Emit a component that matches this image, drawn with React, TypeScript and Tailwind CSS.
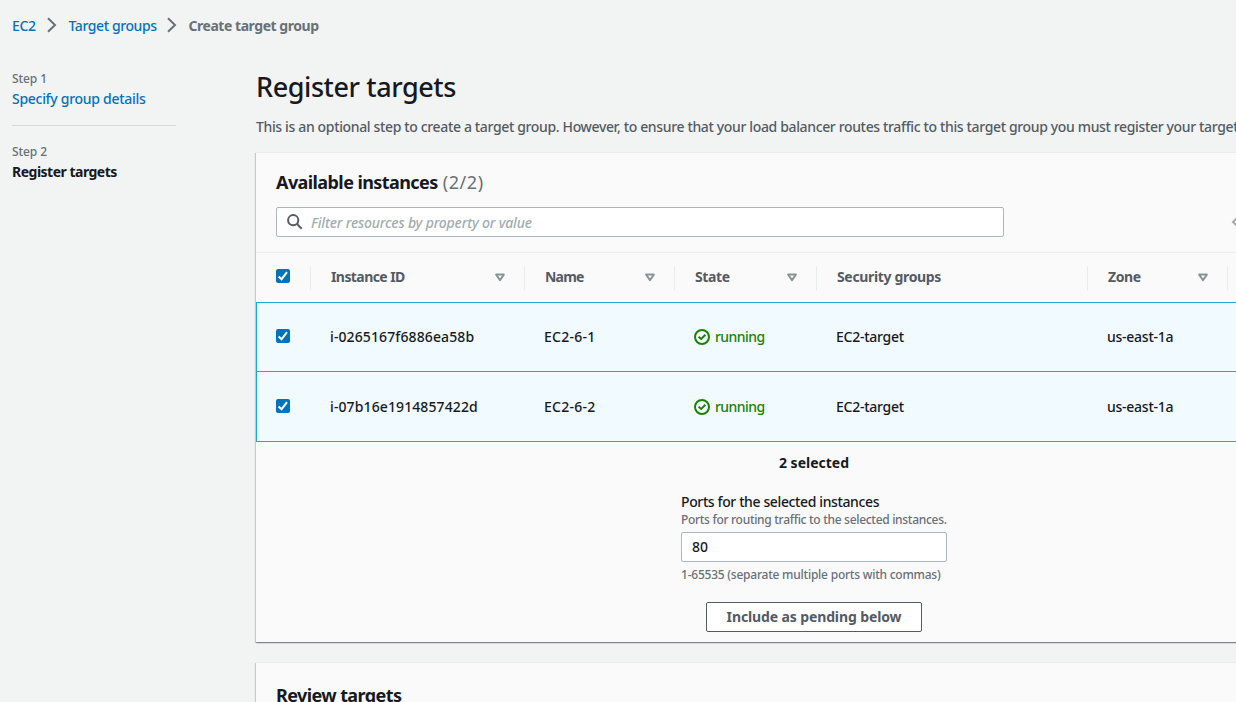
import React from "react";

type Instance = { id: string; name: string; state: string; group: string; zone: string };

const instances: Instance[] = [
  { id: "i-0265167f6886ea58b", name: "EC2-6-1", state: "running", group: "EC2-target", zone: "us-east-1a" },
  { id: "i-07b16e1914857422d", name: "EC2-6-2", state: "running", group: "EC2-target", zone: "us-east-1a" },
];

const columns = [
  { label: "Instance ID", sortable: true, tracking: "tracking-[-0.58px]" },
  { label: "Name", sortable: true, tracking: "tracking-[-0.8px]" },
  { label: "State", sortable: true, tracking: "tracking-[-0.4px]" },
  { label: "Security groups", sortable: false, tracking: "tracking-[-0.34px]" },
  { label: "Zone", sortable: true, tracking: "tracking-[-0.4px]" },
];

const gridCols = "grid grid-cols-[54px_214px_150px_142px_271px_140px_1fr]";

const cardClass =
  "w-[1116px] border-t border-[#eaeded] bg-[#fafafa] shadow-[0_1px_1px_0_rgba(0,28,36,0.3),1px_1px_1px_0_rgba(0,28,36,0.15),-1px_1px_1px_0_rgba(0,28,36,0.15)]";

function BreadcrumbChevron() {
  return (
    <svg className="h-4 w-[10px] shrink-0" viewBox="0 0 10 16" fill="none" stroke="#687078" strokeWidth="2">
      <path d="M1 1.3 8 8 1 14.7" />
    </svg>
  );
}

function SortIcon() {
  return (
    <svg className="h-[9px] w-[10px] shrink-0" viewBox="0 0 10 9" fill="none" stroke="#879596" strokeWidth="2" strokeLinejoin="round">
      <path d="M1.2 1.6h7.6L5 7.2z" />
    </svg>
  );
}

function Checkbox() {
  return (
    <span className="flex h-[14px] w-[14px] items-center justify-center rounded-[2px] bg-[#0073bb]">
      <svg className="h-[14px] w-[14px]" viewBox="0 0 14 14" fill="none" stroke="#fff" strokeWidth="2">
        <path d="M2.6 7.4 5.6 10.2 11 3.2" />
      </svg>
    </span>
  );
}

function RunningIcon() {
  return (
    <svg className="h-4 w-4 shrink-0" viewBox="0 0 16 16" fill="none" stroke="#1d8102" strokeWidth="2">
      <circle cx="8" cy="8" r="7" />
      <path d="M4.6 7.7 7.2 10 11.4 5.8" />
    </svg>
  );
}

function Breadcrumbs() {
  return (
    <nav className="flex h-5 items-center text-[#0073bb]">
      <a className="w-[35px] pt-px tracking-[-0.3px]">EC2</a>
      <BreadcrumbChevron />
      <a className="ml-[11.5px] w-[98.5px] pt-px tracking-[-0.41px]">Target groups</a>
      <BreadcrumbChevron />
      <span className="ml-[11.5px] pt-px font-bold tracking-[-0.46px] text-[#687078]">Create target group</span>
    </nav>
  );
}

function Steps() {
  return (
    <aside className="w-[164px] shrink-0">
      <div className="text-[12px] leading-[21px] tracking-[-0.1px] text-[#687078]">Step 1</div>
      <div className="tracking-[-0.29px] text-[#0073bb]">Specify group details</div>
      <div className="mt-4 h-px bg-[#d5dbdb]" />
      <div className="mt-4 text-[12px] tracking-[-0.1px] text-[#687078]">Step 2</div>
      <div className="font-bold tracking-[-0.5px]">Register targets</div>
    </aside>
  );
}

function InstanceRow({ item, first }: { item: Instance; first: boolean }) {
  return (
    <div className={`${gridCols} h-[70px] items-center border-b border-l border-[#1aabcf] bg-[#f1faff] ${first ? "border-t" : ""}`}>
      <div className="-mt-[2px] pl-[19px]"><Checkbox /></div>
      <div className="pl-[19px] tracking-[0.11px]">{item.id}</div>
      <div className="pl-[19px] tracking-[0.25px]">{item.name}</div>
      <div className="flex items-center gap-[5px] pl-[19px] tracking-[-0.55px] text-[#1d8102]">
        <RunningIcon />
        {item.state}
      </div>
      <div className="pl-[19px] tracking-[-0.25px]">{item.group}</div>
      <div className="pl-[19px] tracking-[-0.25px]">{item.zone}</div>
      <div />
    </div>
  );
}

function AvailableInstances() {
  return (
    <section className={`${cardClass} h-[490px]`}>
      <h2 className="flex gap-[5px] pt-[17px] pl-5 text-[18px] leading-6">
        <span className="font-bold tracking-[-0.58px]">Available instances</span>
        <span className="font-normal tracking-[0.6px] text-[#687078]">(2/2)</span>
      </h2>
      <div className="mt-[13px] flex items-center pl-5">
        <div className="flex h-[30px] w-[728px] items-center rounded-[2px] border border-[#aab7b8] bg-white pl-[10px]">
          <svg className="h-4 w-4 shrink-0" viewBox="0 0 16 16" fill="none" stroke="#545b64" strokeWidth="2">
            <circle cx="6.2" cy="6.2" r="5.1" />
            <path d="m9.9 9.9 4.8 4.8" />
          </svg>
          <span className="ml-2 pt-px tracking-[-0.18px] text-[#9fadae] italic">Filter resources by property or value</span>
        </div>
        <svg className="ml-[227px] h-4 w-[10px]" viewBox="0 0 10 16" fill="none" stroke="#9fadae" strokeWidth="2">
          <path d="M8 2.3 2 8 8 13.7" />
        </svg>
      </div>
      <div className={`${gridCols} mt-[15px] h-[50px] items-center border-t border-[#eaeded] text-[#545b64]`}>
        <div className="-mt-[3px] pl-5"><Checkbox /></div>
        {columns.map((c) => (
          <div key={c.label} className="flex h-6 items-center justify-between border-l border-[#eaeded] pr-[19px] pl-5">
            <span className={`pb-[2px] font-bold ${c.tracking}`}>{c.label}</span>
            {c.sortable && <SortIcon />}
          </div>
        ))}
        <div className="h-6 border-l border-[#eaeded]" />
      </div>
      {instances.map((item, i) => (
        <InstanceRow key={item.id} item={item} first={i === 0} />
      ))}
      <div className="flex flex-col items-center pt-[11px]">
        <div className="font-bold">2 selected</div>
        <div className="mt-[19px] w-[266px] whitespace-nowrap">
          <div className="leading-5 tracking-[-0.38px]">Ports for the selected instances</div>
          <div className="text-[12px] leading-4 tracking-[-0.3px] text-[#687078]">Ports for routing traffic to the selected instances.</div>
          <div className="mt-1 flex h-[30px] items-center rounded-[2px] border border-[#aab7b8] bg-white pl-[10px]">80</div>
          <div className="mt-[5px] text-[12px] leading-4 tracking-[-0.23px] text-[#687078]">1-65535 (separate multiple ports with commas)</div>
        </div>
        <button className="mt-[19px] flex h-[30px] w-[216px] items-center justify-center rounded-[2px] border border-[#545b64] bg-white font-bold tracking-[-0.12px] text-[#545b64]">
          Include as pending below
        </button>
      </div>
    </section>
  );
}

export default function App() {
  return (
    <div className="h-screen w-full overflow-hidden bg-[#f2f3f3] pt-[15px] pl-3 font-['Noto_Sans',sans-serif] text-[14px] leading-5 font-medium text-[#16191f]">
      <Breadcrumbs />
      <div className="flex gap-20 pt-[33px]">
        <Steps />
        <main className="w-[1116px] shrink-0">
          <h1 className="pt-px text-[27px] leading-9 font-medium tracking-[-0.42px]">Register targets</h1>
          <p className="mt-3 tracking-[-0.355px] whitespace-nowrap text-[#545b64]">
            This is an optional step to create a target group. However, to ensure that your load balancer routes traffic to this target group you must register your targets
          </p>
          <div className="mt-[15px]"><AvailableInstances /></div>
          <section className={`${cardClass} mt-5 h-[200px] pt-5 pl-5`}>
            <h2 className="text-[18px] leading-6 font-bold tracking-[-0.6px]">Review targets</h2>
          </section>
        </main>
      </div>
    </div>
  );
}
